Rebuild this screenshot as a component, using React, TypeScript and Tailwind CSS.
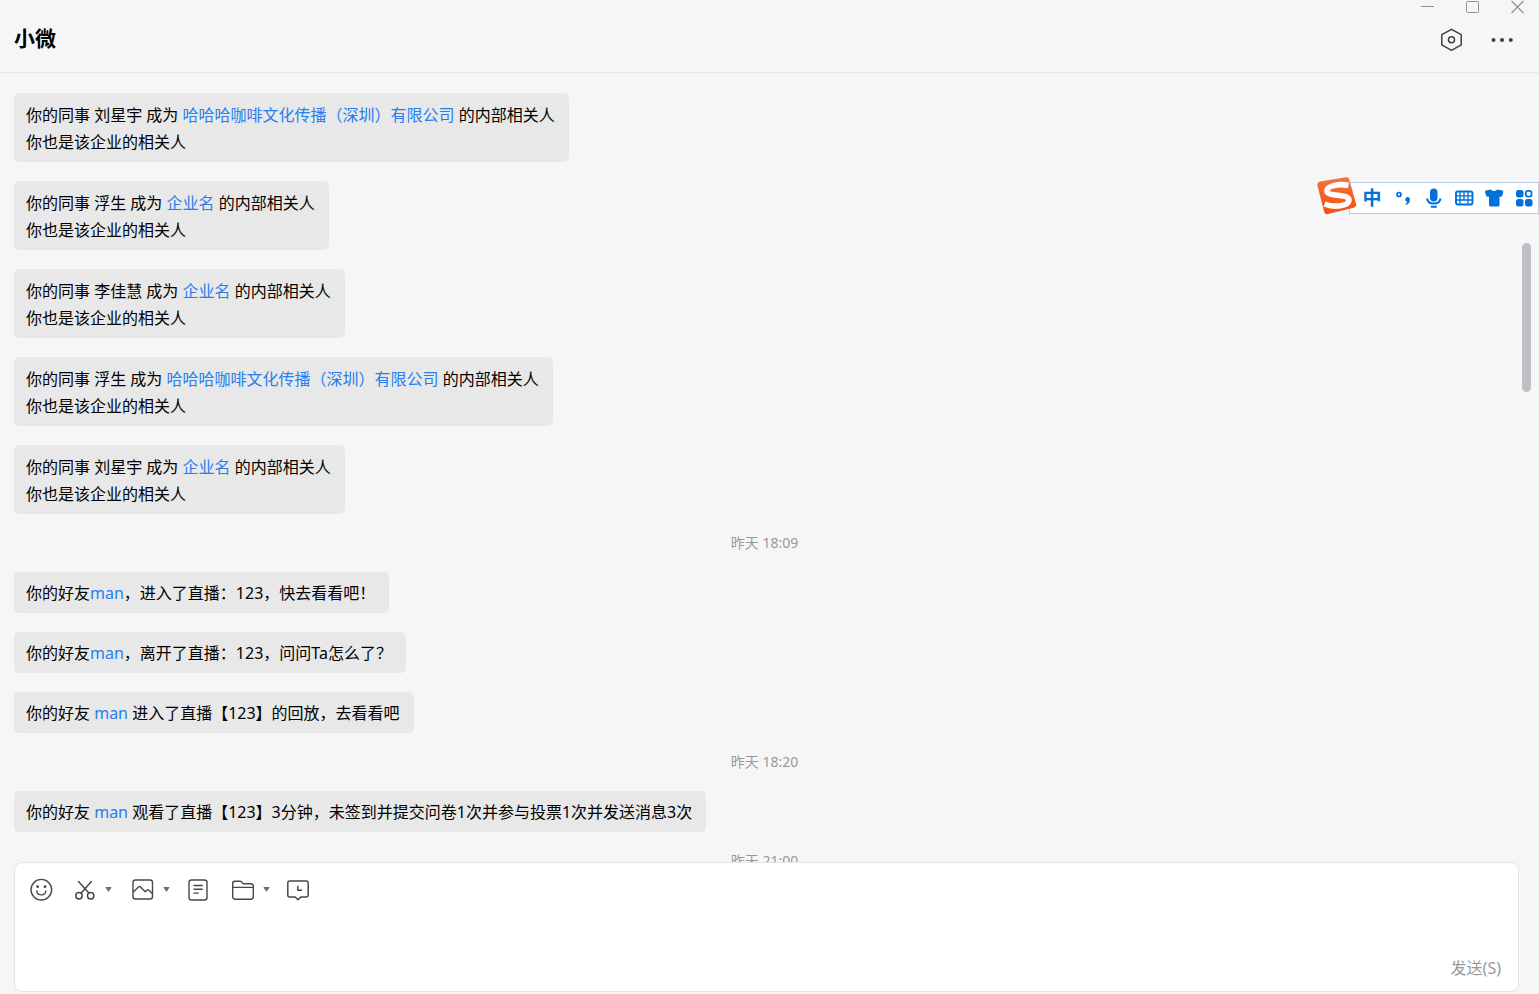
import {Fragment} from 'react';
import type {ReactNode} from 'react';

type Message = {
	id: number;
	before: string;
	link: string;
	after: string;
	secondLine?: string;
};

type MessageGroup = {
	id: string;
	time?: string;
	messages: Message[];
};

type IconButtonProperties = {
	label: string;
	children: ReactNode;
	className?: string;
};

const RELATED_LINE = '你也是该企业的相关人';

const groups: MessageGroup[] = [
	{
		id: 'colleagues',
		messages: [
			{id: 1, before: '你的同事 刘星宇 成为 ', link: '哈哈哈咖啡文化传播（深圳）有限公司', after: ' 的内部相关人', secondLine: RELATED_LINE},
			{id: 2, before: '你的同事 浮生 成为 ', link: '企业名', after: ' 的内部相关人', secondLine: RELATED_LINE},
			{id: 3, before: '你的同事 李佳慧 成为 ', link: '企业名', after: ' 的内部相关人', secondLine: RELATED_LINE},
			{id: 4, before: '你的同事 浮生 成为 ', link: '哈哈哈咖啡文化传播（深圳）有限公司', after: ' 的内部相关人', secondLine: RELATED_LINE},
			{id: 5, before: '你的同事 刘星宇 成为 ', link: '企业名', after: ' 的内部相关人', secondLine: RELATED_LINE},
		],
	},
	{
		id: 'live',
		time: '昨天 18:09',
		messages: [
			{id: 6, before: '你的好友', link: 'man', after: '，进入了直播：123，快去看看吧！'},
			{id: 7, before: '你的好友', link: 'man', after: '，离开了直播：123，问问Ta怎么了？'},
			{id: 8, before: '你的好友 ', link: 'man', after: ' 进入了直播【123】的回放，去看看吧'},
		],
	},
	{
		id: 'summary',
		time: '昨天 18:20',
		messages: [
			{id: 9, before: '你的好友 ', link: 'man', after: ' 观看了直播【123】3分钟，未签到并提交问卷1次并参与投票1次并发送消息3次'},
		],
	},
	{id: 'latest', time: '昨天 21:00', messages: []},
];

const IconButton = ({label, children, className = ''}: IconButtonProperties) => (
	<button type="button" aria-label={label} className={`flex shrink-0 items-center justify-center ${className}`}>
		{children}
	</button>
);

const Caret = () => (
	<svg width="7" height="6" viewBox="0 0 7 6" fill="#6b6e73" aria-hidden="true">
		<path d="M1 0h5q.8 0 .3.8L4 4.300q-.5.7-1 0L.7.8Q.2 0 1 0Z"/>
	</svg>
);

const MessageBubble = ({message}: {message: Message}) => (
	<div className={`max-w-full rounded-[5px] bg-[#e8e8e8] pr-[14px] pb-[6px] pl-3 text-base leading-[27px] text-black ${message.secondLine ? 'pt-[9px]' : 'pt-2'}`}>
		<p>
			{message.before}
			<a href="#" className="text-[#267ef0]">{message.link}</a>
			{message.after}
		</p>
		{message.secondLine && <p>{message.secondLine}</p>}
	</div>
);

const WindowControls = () => (
	<div className="flex h-[14px] gap-8 pr-[2px] text-[#8e9196]">
		<IconButton label="最小化" className="w-[13px]">
			<svg width="13" height="14" viewBox="0 0 13 14" fill="none" stroke="currentColor">
				<path d="M0 6.500h13"/>
			</svg>
		</IconButton>
		<IconButton label="最大化" className="w-[13px]">
			<svg width="13" height="14" viewBox="0 0 13 14" fill="none" stroke="currentColor">
				<rect x=".5" y="1.500" width="12" height="11" rx="1"/>
			</svg>
		</IconButton>
		<IconButton label="关闭" className="w-[13px]">
			<svg width="13" height="14" viewBox="0 0 13 14" fill="none" stroke="currentColor" strokeWidth="1.200">
				<path d="m.5 1 12 12M12.500 1l-12 12"/>
			</svg>
		</IconButton>
	</div>
);

const Header = () => (
	<header className="flex shrink-0 items-start justify-between border-b border-[#e6e6e6] pr-[13px] pl-[14px]">
		<h1 className="pt-[23px] text-[21px] leading-[30px] font-bold text-black">小微</h1>
		<div className="flex flex-col items-end">
			<WindowControls/>
			<div className="flex h-[58px] items-start gap-[26px] pt-[14px] pr-3 text-[#3c4046]">
				<IconButton label="设置" className="h-6 w-6">
					<svg width="24" height="24" viewBox="0 0 24 24" fill="none" stroke="currentColor" strokeWidth="1.500" strokeLinejoin="round">
						<path d="M11.500 1.300 21.200 6.600v10.300L11.500 22.300 1.800 16.900V6.600Z"/>
						<circle cx="11.500" cy="11.700" r="3"/>
					</svg>
				</IconButton>
				<IconButton label="更多" className="h-6 w-6">
					<svg width="24" height="24" viewBox="0 0 24 24" fill="currentColor">
						<circle cx="3.500" cy="12" r="2"/>
						<circle cx="12" cy="12" r="2"/>
						<circle cx="20.800" cy="12" r="2"/>
					</svg>
				</IconButton>
			</div>
		</div>
	</header>
);

const Composer = () => (
	<form className="mr-5 mb-[2px] ml-[14px] flex h-[130px] shrink-0 flex-col rounded-lg border border-[#e4e4e4] bg-white">
		<div className="flex items-center pt-[15px] pl-[14px] text-[#45494e]">
			<IconButton label="表情" className="mr-5 h-6 w-6">
				<svg width="24" height="24" viewBox="0 0 24 24" fill="none" stroke="currentColor" strokeWidth="1.400" strokeLinecap="round">
					<circle cx="12.300" cy="11.700" r="10.300"/>
					<path d="M7.800 13c.6 5.200 8.400 5.200 9 0"/>
					<circle cx="8.600" cy="8.700" r=".7" fill="currentColor"/>
					<circle cx="16" cy="8.700" r=".7" fill="currentColor"/>
				</svg>
			</IconButton>
			<IconButton label="截图" className="h-6 w-6">
				<svg width="24" height="24" viewBox="0 0 24 24" fill="none" stroke="currentColor" strokeWidth="1.500" strokeLinecap="round">
					<circle cx="6" cy="17.800" r="3.200"/>
					<circle cx="17.700" cy="17.800" r="3.200"/>
					<path d="M5.500 3.500 15.900 15.100M18.300 3.500 8 15.300"/>
				</svg>
			</IconButton>
			<IconButton label="截图选项" className="mr-3 h-6 w-[22px]"><Caret/></IconButton>
			<IconButton label="图片" className="h-6 w-6">
				<svg width="24" height="24" viewBox="0 0 24 24" fill="none" stroke="currentColor" strokeWidth="1.400" strokeLinejoin="round">
					<rect x="2" y="2" width="19.500" height="19" rx="2.500"/>
					<path d="m2 14.200 5.500-5.200q1-.9 2 0l4.800 4.800 1.600-1.500q1-.9 2 0l3.400 3.200"/>
				</svg>
			</IconButton>
			<IconButton label="图片选项" className="mr-[9px] h-6 w-[22px]"><Caret/></IconButton>
			<IconButton label="文档" className="mr-[21px] h-6 w-6">
				<svg width="24" height="24" viewBox="0 0 24 24" fill="none" stroke="currentColor" strokeWidth="1.400" strokeLinecap="round">
					<rect x="3" y="2" width="18" height="20" rx="2.500"/>
					<path d="M8 7.500h8.300M8 11.300h8.300M8 15.100h4.300"/>
				</svg>
			</IconButton>
			<IconButton label="文件" className="h-6 w-6">
				<svg width="24" height="24" viewBox="0 0 24 24" fill="none" stroke="currentColor" strokeWidth="1.400" strokeLinejoin="round">
					<path d="M1.700 9.200V5.500q0-2.200 2.200-2.200h5.300q.8 0 1.300.6l1 1.200q.5.600 1.300.600h7q2.500 0 2.500 2.300v10.500q0 2.700-2.500 2.700H4.200q-2.500 0-2.500-2.700V9.400h20.600"/>
				</svg>
			</IconButton>
			<IconButton label="文件选项" className="mr-[9px] h-6 w-[22px]"><Caret/></IconButton>
			<IconButton label="聊天记录" className="h-6 w-6">
				<svg width="24" height="24" viewBox="0 0 24 24" fill="none" stroke="currentColor" strokeWidth="1.500" strokeLinejoin="round">
					<path d="M3.800 3h16.400q2 0 2 2v12q0 2-2 2h-5.400L12 21.700 9.200 19H3.800q-2 0-2-2V5q0-2 2-2Z"/>
					<path d="M11.800 7.800v4.500H16"/>
				</svg>
			</IconButton>
		</div>
		<textarea aria-label="输入消息" className="min-h-0 w-full flex-1 resize-none px-4 py-1 text-base outline-none"/>
		<div className="flex justify-end pr-[17px] pb-2">
			<button type="button" className="text-base leading-[30px] text-[#999]">发送(S)</button>
		</div>
	</form>
);

const InputMethodBar = () => (
	<div className="absolute top-[177px] right-0 flex items-end text-[#0070dc]">
		<svg className="relative z-10 -mr-2" width="40" height="38" viewBox="0 0 40 38" role="img" aria-label="输入法">
			<defs>
				<linearGradient id="logo" x1="0" y1="0" x2="0" y2="1">
					<stop offset="0" stopColor="#f47340"/>
					<stop offset="1" stopColor="#f4500f"/>
				</linearGradient>
			</defs>
			<path d="M3 4.500 29 .3q2.500-.4 3.200 2L39 26.500q.6 2.500-1.600 4L11 37q-3 .7-3.800-2L.4 8.500Q-.2 5.200 3 4.500Z" fill="url(#logo)"/>
			<path d="M31.500 8.200C21 6.500 9.500 9 10 14.200c.6 5.800 22 2.300 22 8.800C32 29 17 31 7.500 27" fill="none" stroke="#fff" strokeWidth="5.600"/>
		</svg>
		<div className="mb-px flex h-8 items-center border border-[#b5cde6] bg-white pr-1 pl-3">
			<button type="button" className="w-5 text-center text-[19px] leading-7 font-bold">中</button>
			<IconButton label="中文标点" className="ml-3 h-5 w-5">
				<svg width="20" height="20" viewBox="0 0 20 20">
					<circle cx="5" cy="6.500" r="2" fill="none" stroke="currentColor" strokeWidth="1.700"/>
					<path d="M13.300 9a2.600 2.600 0 0 1 2.600 2.800c0 2.800-1.600 4.600-4 5.200l-.4-1.200c1-.5 1.600-1 1.800-1.900A2.500 2.500 0 0 1 13.300 9Z" fill="currentColor"/>
				</svg>
			</IconButton>
			<IconButton label="语音输入" className="ml-[10px] h-5 w-5">
				<svg width="20" height="20" viewBox="0 0 20 20" fill="none" stroke="currentColor" strokeWidth="1.900">
					<rect x="6" y=".5" width="7.500" height="13" rx="3.750" fill="currentColor" stroke="none"/>
					<path d="M3 10.500c1 6.700 12.500 6.700 13.500 0M6.800 18.800h6"/>
				</svg>
			</IconButton>
			<IconButton label="软键盘" className="ml-[10px] h-5 w-5">
				<svg width="20" height="20" viewBox="0 0 20 20" fill="none" stroke="currentColor" strokeWidth="1.900">
					<rect x="2" y="3.500" width="16.500" height="13" rx="2"/>
					<path d="M2 7.800h16M2 12h16M6 4v8M10 4v8M14 4v8M6 12v4M14 12v4" strokeWidth="1.300"/>
				</svg>
			</IconButton>
			<IconButton label="皮肤" className="ml-[10px] h-5 w-5">
				<svg width="20" height="20" viewBox="0 0 20 20" fill="currentColor">
					<path d="M6.500 1.500q3.500 3 7 0L18.500 2.500q1 .6.800 1.500L18 8.500l-2.500.3V17q0 1.500-1.500 1.500H6.500Q5 18.500 5 17V8.800L2.500 8.500 1 4q-.2-.9.8-1.500Z"/>
				</svg>
			</IconButton>
			<IconButton label="工具箱" className="ml-[10px] h-5 w-5">
				<svg width="20" height="20" viewBox="0 0 20 20" fill="currentColor">
					<rect x="2" y="2" width="7.500" height="7.500" rx="2.500"/>
					<rect x="11.800" y="2.900" width="5.700" height="5.700" rx="2" fill="none" stroke="currentColor" strokeWidth="1.800"/>
					<rect x="2" y="11" width="7.500" height="7.500" rx="2.500"/>
					<rect x="11" y="11" width="7.500" height="7.500" rx="2.500"/>
				</svg>
			</IconButton>
		</div>
	</div>
);

const App = () => (
	<div lang="zh-CN" className="relative flex h-screen flex-col overflow-hidden bg-[#f6f6f6] font-['Noto_Sans','Noto_Sans_CJK_SC',sans-serif]">
		<Header/>
		<main className="relative min-h-0 flex-1 overflow-hidden">
			<div className="flex flex-col items-start gap-[19px] pt-5 pr-6 pl-[14px]">
				{groups.map(group => (
					<Fragment key={group.id}>
						{group.time && (
							<time className="w-full text-center text-sm leading-5 text-[#999]">{group.time}</time>
						)}
						{group.messages.map(message => (
							<MessageBubble key={message.id} message={message}/>
						))}
					</Fragment>
				))}
			</div>
			<div className="absolute top-[170px] right-2 h-[149px] w-[9px] rounded-full bg-[#bfc0c5]"/>
		</main>
		<Composer/>
		<InputMethodBar/>
	</div>
);

export default App;
